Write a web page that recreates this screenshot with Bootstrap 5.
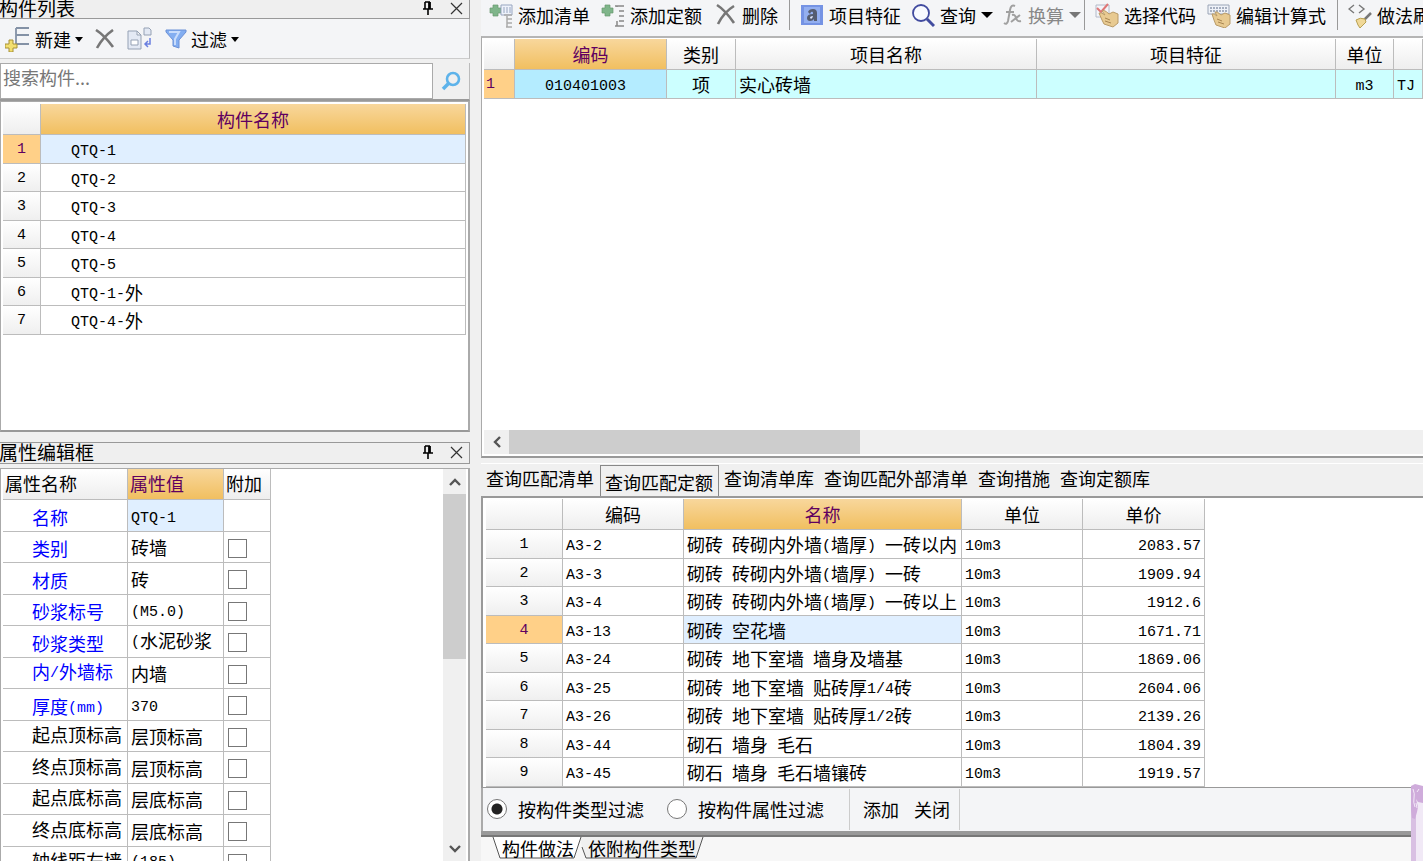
<!DOCTYPE html>
<html lang="zh-CN">
<head>
<meta charset="utf-8">
<meta name="viewport" content="width=device-width, initial-scale=1">
<title>构件做法</title>
<link href="https://cdn.jsdelivr.net/npm/bootstrap@5.3.0/dist/css/bootstrap.min.css" rel="stylesheet">
<style>
  body { background: #f0f0f0; color: #000; font: 18px/24px "Noto Sans CJK SC", sans-serif; }
  .l, .num { font-family: "Liberation Mono", "Noto Sans CJK SC", monospace; font-size: 15px; white-space: pre; }
  .l { line-height: 0; vertical-align: 2px; }
  .side { flex: 0 0 470px; }
  .work { min-width: 0; margin-left: 11px; }
  button { border: 0; background: none; padding: 0; color: inherit; white-space: nowrap; }
  svg { display: block; flex: none; }

  .panel-title { flex: none; height: 22px; border: 1px solid #999; border-left: 0; background: #efefef; font-size: 19px; line-height: 20px; padding-right: 6px; padding-bottom: 2px; }
  .panel-title h2 { font: inherit; margin: 0 0 0 -1px; }
  .panel-title.first { height: 19px; border-top: 0; padding-bottom: 3px; }
  .tools { flex: none; height: 40px; background: #f4f5f7; border-right: 1px solid #bbb; border-bottom: 1px solid #ccc; padding-left: 5px; padding-top: 1px; gap: 12px; }
  .caret { width: 0; border: 4px solid transparent; border-top: 5px solid #000; border-bottom: 0; }
  .caret.wide { border-width: 6px 6px 0; }
  .search { height: 38px; border-bottom: 2px solid #999; border-right: 1px solid #bbb; }
  .search input { border: 1px solid #aaa; border-radius: 0; background: #fff; font-size: 18px; padding: 0 0 8px 2px; min-width: 0; color: #000; }
  .search input::placeholder { color: #777; opacity: 1; }
  .search button { width: 36px; display: flex; justify-content: center; align-items: center; }
  .pane { background: #fff; border: 1px solid #aaa; border-right: 2px solid #aaa; padding: 2px; }
  .pane-list { height: 331px; border-bottom: 2px solid #999; }

  .sheet { border-collapse: separate; border-spacing: 0; table-layout: fixed; line-height: 24px; }
  .sheet th, .sheet td { padding: 0 0 0 3px; border-right: 1px solid #bcbcbc; border-bottom: 1px solid #bcbcbc; font-weight: 400; white-space: nowrap; overflow: hidden; vertical-align: middle; }
  .sheet thead th { height: 31px; background: linear-gradient(#fff, #eee); text-align: center; padding: 0; }
  .sheet thead .hot { background: linear-gradient(#f8d79c, #f1bf60); color: #600060; }
  .sheet tbody tr { height: 29px; }
  .sheet tbody tr:nth-child(even) { height: 28px; }
  .sheet .num { text-align: center; padding: 2px 0 0; background: linear-gradient(#fff, #efefef); }
  .sheet .sel .num { background: #ffd088; color: #600060; }
  .sheet .cur { background: #e0efff; }
  .sheet td.mid { text-align: center; padding-left: 0; }
  .names td:last-child { padding-left: 30px; }
  .props thead th { text-align: left; padding: 0 0 2px 2px; }
  .props tbody tr:nth-child(odd) { height: 32px; }
  .props tbody tr:nth-child(even) { height: 31px; }
  .props tbody th { padding: 2px 0 0 29px; color: #00f; }
  .props tbody .long { padding: 0 0 4px 29px; }
  .props tbody .plain { color: #000; }
  .props input { appearance: none; display: block; width: 19px; height: 19px; border: 1px solid #777; background: #fff; margin: 2px 0 0 1px; }
  .bill td { background: #ccffff; }
  .sheet td.code { background: #b4ecff; padding-right: 10px; }
  .bill .num { text-align: left; padding-left: 2px; }
  .quota .price { text-align: right; padding-right: 3px; }

  .vbar { width: 23px; background: #f0f0f0; }
  .vbar i { height: 165px; background: #cdcdcd; }
  .vbar span, .hbar span { display: flex; justify-content: center; align-items: center; }
  .vbar span { height: 25px; }
  .hbar { height: 24px; background: #f0f0f0; }
  .hbar span { width: 25px; }
  .hbar i { width: 351px; background: #cdcdcd; }

  .cmds { height: 36px; background: #f4f5f7; overflow: hidden; padding: 0 0 6px 8px; }
  .cmds button { display: flex; align-items: center; gap: 5px; margin-right: 11px; flex: none; }
  .cmds .sep { width: 1px; height: 30px; background: #999; margin-right: 10px; flex: none; }
  .cmds .drop { margin-right: 10px; }
  .cmds .tight { margin-right: 3px; color: #888; }
  .bill-pane { height: 422px; border: 1px solid #aaa; border-top: 2px solid #b5b5b5; border-bottom: 2px solid #999; border-right: 0; background: #fff; padding: 1px 0 2px 2px; overflow: hidden; }
  .qtabs { height: 33px; margin-top: 5px; border-top: 1px solid #fff; overflow: hidden; }
  .qtabs button { line-height: 28px; margin: 0 5px; flex: none; }
  .qtabs .on { border: 1px solid #888; border-bottom: 0; padding: 2px 5px 0 4px; margin: 1px 0 0 1px; height: 31px; }
  .quota-pane { height: 292px; border: 1px solid #999; border-width: 2px 0 1px 2px; background: #fff; padding: 1px 0 0 3px; overflow: hidden; }
  .filter { height: 43px; background: #f4f5f7; border-left: 2px solid #aaa; padding: 0 0 1px 4px; }
  .filter label { margin-left: 11px; }
  .filter input { appearance: none; width: 20px; height: 20px; border: 1px solid #777; border-radius: 50%; background: #fff; margin: 0; }
  .filter input:checked { background: radial-gradient(circle, #222 5px, #fff 6px); }
  .filter label + input { margin-left: 23px; }
  .filter .acts { border: 1px solid #ccc; border-width: 0 1px; height: 41px; margin-left: 25px; padding: 0 9px 0 13px; gap: 15px; }
  .band { height: 6px; background: #999; border-bottom: 2px solid #777; }
  .foot { background: #f7f7f7; padding-left: 11px; height: 30px; }
  .sheet-tab { position: relative; height: 22px; line-height: 22px; margin-right: -4px; padding: 0 8px 0 10px; }
  .sheet-tab svg { position: absolute; inset: 0; width: 100%; height: 100%; }
  .sheet-tab b { position: relative; font-weight: 400; }
  .deco { position: absolute; right: 0; bottom: 0; }
</style>
</head>
<body>
<div class="vh-100 d-flex overflow-hidden position-relative">

  <aside class="side d-flex flex-column">
    <header class="panel-title first d-flex align-items-center justify-content-between">
      <h2>构件列表</h2>
      <div class="d-flex gap-3">
        <button aria-label="固定"><svg width="12" height="14" viewBox="0 0 12 14" fill="none" stroke="#000" stroke-width="1.6"><path d="M3 1v7M8 1v7M3 1h5M1 8h10M6 8v6"/><path d="M7.3 1v7" stroke-width="2.4"/></svg></button>
        <button aria-label="关闭"><svg width="13" height="14" viewBox="0 0 13 14" stroke="#333" stroke-width="1.2"><path d="M1 2l11 11M12 2L1 13"/></svg></button>
      </div>
    </header>
    <div class="tools d-flex align-items-center">
      <button class="d-flex align-items-center">
        <svg class="me-1" width="26" height="26" viewBox="0 0 26 26"><path d="M11 2v7h13M11 9v9h13M11 2h13" fill="none" stroke="#8492a6" stroke-width="1.8"/><path d="M4 14h4v4h4v4H8v4H4v-4H0v-4h4z" fill="#f2df70" stroke="#a69034"/></svg>
        新建<span class="caret ms-1"></span></button>
      <button aria-label="删除"><svg width="20" height="20" viewBox="0 0 20 20"><path d="M1 1Q9 6 18 18M18 1Q8 8 2 19" stroke="#777" stroke-width="2.6" fill="none"/></svg></button>
      <button aria-label="复制"><svg width="26" height="24" viewBox="0 0 26 24" fill="#e3e9f4" stroke="#95a1b4"><path d="M1 4h9l4 4v14H1zM10 4v4h4"/><path d="M4 13h7v5H4z" fill="#fff"/><path d="M17 1h5l2 2v5h-7z"/><path d="M23 11v6h-5m3-3l-3 3 3 3" fill="none" stroke="#6a7fe0" stroke-width="1.5"/></svg></button>
      <button class="d-flex align-items-center">
        <svg class="me-1" width="22" height="20" viewBox="0 0 22 20"><path d="M1 1h20v2l-7 8v8l-6-2v-6L1 3z" fill="#83aef1" stroke="#6b90d6"/><path d="M4 3h10l-4 7v6" stroke="#c8dcfc" stroke-width="2" fill="none"/></svg>
        过滤<span class="caret ms-1"></span></button>
    </div>
    <div class="search d-flex mt-1 flex-shrink-0 align-items-stretch">
      <input class="flex-grow-1" type="text" placeholder="搜索构件..." aria-label="搜索构件">
      <button aria-label="搜索"><svg width="20" height="20" viewBox="0 0 20 20" fill="none" stroke="#5eb3ea"><circle cx="12" cy="8" r="6" stroke-width="2.6"/><path d="M8 12l-6 6" stroke-width="3.6"/></svg></button>
    </div>
    <div class="pane pane-list flex-shrink-0">
      <table class="sheet names w-100">
        <colgroup><col style="width:38px"><col></colgroup>
        <thead><tr><th></th><th class="hot">构件名称</th></tr></thead>
        <tbody>
          <tr class="sel"><td class="num">1</td><td class="cur"><span class="l">QTQ-1</span></td></tr>
          <tr><td class="num">2</td><td><span class="l">QTQ-2</span></td></tr>
          <tr><td class="num">3</td><td><span class="l">QTQ-3</span></td></tr>
          <tr><td class="num">4</td><td><span class="l">QTQ-4</span></td></tr>
          <tr><td class="num">5</td><td><span class="l">QTQ-5</span></td></tr>
          <tr><td class="num">6</td><td><span class="l">QTQ-1-</span>外</td></tr>
          <tr><td class="num">7</td><td><span class="l">QTQ-4-</span>外</td></tr>
        </tbody>
      </table>
    </div>
    <header class="panel-title d-flex align-items-center justify-content-between" style="margin-top:10px">
      <h2>属性编辑框</h2>
      <div class="d-flex gap-3">
        <button aria-label="固定"><svg width="12" height="14" viewBox="0 0 12 14" fill="none" stroke="#000" stroke-width="1.6"><path d="M3 1v7M8 1v7M3 1h5M1 8h10M6 8v6"/><path d="M7.3 1v7" stroke-width="2.4"/></svg></button>
        <button aria-label="关闭"><svg width="13" height="14" viewBox="0 0 13 14" stroke="#333" stroke-width="1.2"><path d="M1 2l11 11M12 2L1 13"/></svg></button>
      </div>
    </header>
    <div class="pane mt-1 flex-grow-1 d-flex justify-content-between overflow-hidden py-0 border-bottom-0">
      <table class="sheet props align-self-start" style="width:268px">
        <colgroup><col style="width:125px"><col style="width:96px"><col style="width:47px"></colgroup>
        <thead><tr><th>属性名称</th><th class="hot">属性值</th><th>附加</th></tr></thead>
        <tbody>
          <tr><th>名称</th><td class="cur"><span class="l">QTQ-1</span></td><td></td></tr>
          <tr><th>类别</th><td>砖墙</td><td><input type="checkbox" aria-label="类别"></td></tr>
          <tr><th>材质</th><td>砖</td><td><input type="checkbox" aria-label="材质"></td></tr>
          <tr><th>砂浆标号</th><td><span class="l">(M5.0)</span></td><td><input type="checkbox" aria-label="砂浆标号"></td></tr>
          <tr><th>砂浆类型</th><td class="pb-1"><span class="l">(</span>水泥砂浆</td><td><input type="checkbox" aria-label="砂浆类型"></td></tr>
          <tr><th class="long">内<span class="l">/</span>外墙标</th><td>内墙</td><td><input type="checkbox" aria-label="内/外墙标"></td></tr>
          <tr><th>厚度<span class="l">(mm)</span></th><td><span class="l">370</span></td><td><input type="checkbox" aria-label="厚度"></td></tr>
          <tr><th class="long plain">起点顶标高</th><td>层顶标高</td><td><input type="checkbox" aria-label="起点顶标高"></td></tr>
          <tr><th class="long plain">终点顶标高</th><td>层顶标高</td><td><input type="checkbox" aria-label="终点顶标高"></td></tr>
          <tr><th class="long plain">起点底标高</th><td>层底标高</td><td><input type="checkbox" aria-label="起点底标高"></td></tr>
          <tr><th class="long plain">终点底标高</th><td>层底标高</td><td><input type="checkbox" aria-label="终点底标高"></td></tr>
          <tr><th class="long plain">轴线距左墙</th><td class="pb-1"><span class="l">(185)</span></td><td><input type="checkbox" aria-label="轴线距左墙"></td></tr>
        </tbody>
      </table>
      <div class="vbar d-flex flex-column">
        <span><svg width="12" height="8" viewBox="0 0 12 8" fill="none" stroke="#555" stroke-width="2.4"><path d="M1 7l5-5 5 5"/></svg></span>
        <i></i>
        <span class="mt-auto"><svg width="12" height="8" viewBox="0 0 12 8" fill="none" stroke="#555" stroke-width="2.4"><path d="M1 1l5 5 5-5"/></svg></span>
      </div>
    </div>
  </aside>

  <main class="work flex-grow-1 d-flex flex-column">
    <div class="cmds d-flex align-items-center flex-shrink-0">
      <button><svg width="24" height="26" viewBox="0 0 24 26"><path d="M4 3h5v3h3v5H9v3H4v-3H1V6h3z" fill="#7fb58a" stroke="#69996f" stroke-width=".7"/><path d="M12 3h11v10H12z" fill="#eef2fb" stroke="#97a5c0"/><path d="M14 6h8M14 8h8M14 10h8" stroke="#97a5c0" stroke-dasharray="2 1"/><path d="M15 13h8M18 14v11M18 17h5M18 21h5M17 25h6" fill="none" stroke="#aaa" stroke-width="1.5"/></svg>添加清单</button>
      <button><svg width="24" height="26" viewBox="0 0 24 26"><path d="M4 3h5v3h3v5H9v3H4v-3H1V6h3z" fill="#7fb58a" stroke="#69996f" stroke-width=".7"/><path d="M14 4h9M18 9h5M18 14h5M18 19h5M14 24h9M16 4v1M16 19v5" fill="none" stroke="#888" stroke-width="1.5"/></svg>添加定额</button>
      <button><svg width="24" height="24" viewBox="0 0 24 24"><path d="M4 2Q12 7 21 20M21 3Q11 9 5 21" stroke="#777" stroke-width="2.6" fill="none"/></svg>删除</button>
      <span class="sep"></span>
      <button class="drop"><svg width="24" height="24" viewBox="0 0 24 24"><path d="M1 2h22v20H1z" fill="#7593e4"/><path d="M4 4h16v16H4z" fill="#93aff0"/><path d="M8 9q1-3 5-3 4 0 4 4v8h-3v-2q-1 2-4 2-3 0-3-3 0-4 6-4v-1q0-2-2-1l-1 2z" fill="#555d70"/><path d="M13 13q-3 0-3 2 2 2 3-2z" fill="#dfe7fb"/></svg>项目特征</button>
      <button class="drop"><svg width="24" height="26" viewBox="0 0 24 26" fill="none" stroke="#414b9f"><circle cx="10" cy="11" r="8" stroke-width="1.8" fill="#f8faff"/><path d="M16 17l7 7" stroke-width="3"/></svg>查询<span class="caret wide"></span></button>
      <button class="tight"><svg width="20" height="22" viewBox="0 0 20 22"><path d="M12 2Q8 0 7 6L5 17Q4 21 1 19M3 8h8M9 11q3-1 4 3t5 3M17 11l-9 7" fill="none" stroke="#a0a0a0" stroke-width="2"/></svg>换算<span class="caret wide" style="border-top-color:#777"></span></button>
      <span class="sep"></span>
      <button><svg width="24" height="26" viewBox="0 0 24 26"><path d="M1 3h13v12H1z" fill="#f3f5fa" stroke="#b4bac8"/><path d="M2 6l4 4 7-8" fill="none" stroke="#df7777" stroke-width="2"/><path d="M4 11q2-1 6 2l-3-4q2-2 7 3l4-2 5 2v9l-5 4-9-3-2-4z" fill="#e8ca91" stroke="#b99b68"/><path d="M10 16l5 2M10 19l6 2" stroke="#a88652"/></svg>选择代码</button>
      <button><svg width="24" height="26" viewBox="0 0 24 26"><path d="M1 3h21v9H1z" fill="#eff2f8" stroke="#9aa4b6"/><path d="M3 6h17M3 9h17" stroke="#8d98ac" stroke-width="1.6" stroke-dasharray="2 1"/><path d="M5 12q2-1 5 2l-2-4q2-1 6 3l4-2 5 2v9l-5 4-9-3-2-5z" fill="#e8ca91" stroke="#b99b68"/><path d="M10 17l5 2M11 20l6 2" stroke="#a88652"/></svg>编辑计算式</button>
      <span class="sep"></span>
      <button><svg width="24" height="26" viewBox="0 0 24 26"><path d="M6 3L1 7l5 4M11 3l5 4-5 4" fill="none" stroke="#777" stroke-width="1.4"/><path d="M23 11l-7 7" stroke="#777" stroke-width="2.5"/><path d="M8 18q4-3 9-1l1 3-6 6-2-3z" fill="#f0d898" stroke="#b8a050"/></svg>做法刷</button>
    </div>
    <section class="bill-pane d-flex flex-column flex-shrink-0">
      <table class="sheet bill w-100">
        <colgroup><col style="width:31px"><col style="width:152px"><col style="width:69px"><col style="width:301px"><col style="width:299px"><col style="width:58px"><col></colgroup>
        <thead><tr><th></th><th class="hot">编码</th><th>类别</th><th>项目名称</th><th>项目特征</th><th>单位</th><th></th></tr></thead>
        <tbody><tr class="sel"><td class="num">1</td><td class="code mid"><span class="l">010401003</span></td><td class="mid">项</td><td>实心砖墙</td><td></td><td class="mid"><span class="l">m3</span></td><td><span class="l">TJ</span></td></tr></tbody>
      </table>
      <div class="hbar d-flex mt-auto">
        <span><svg width="10" height="12" viewBox="0 0 10 12" fill="none" stroke="#555" stroke-width="2.4"><path d="M8 1L3 6l5 5"/></svg></span><i></i>
      </div>
    </section>
    <nav class="qtabs d-flex flex-shrink-0 align-items-start">
      <button>查询匹配清单</button><button class="on">查询匹配定额</button><button>查询清单库</button><button>查询匹配外部清单</button><button>查询措施</button><button>查询定额库</button>
    </nav>
    <section class="quota-pane flex-shrink-0">
      <table class="sheet quota" style="width:719px">
        <colgroup><col style="width:77px"><col style="width:121px"><col style="width:278px"><col style="width:121px"><col style="width:122px"></colgroup>
        <thead><tr><th></th><th>编码</th><th class="hot">名称</th><th>单位</th><th>单价</th></tr></thead>
        <tbody>
          <tr><td class="num">1</td><td><span class="l">A3-2</span></td><td>砌砖<span class="l"> </span>砖砌内外墙<span class="l">(</span>墙厚<span class="l">) </span>一砖以内</td><td><span class="l">10m3</span></td><td class="price"><span class="l">2083.57</span></td></tr>
          <tr><td class="num">2</td><td><span class="l">A3-3</span></td><td>砌砖<span class="l"> </span>砖砌内外墙<span class="l">(</span>墙厚<span class="l">) </span>一砖</td><td><span class="l">10m3</span></td><td class="price"><span class="l">1909.94</span></td></tr>
          <tr><td class="num">3</td><td><span class="l">A3-4</span></td><td>砌砖<span class="l"> </span>砖砌内外墙<span class="l">(</span>墙厚<span class="l">) </span>一砖以上</td><td><span class="l">10m3</span></td><td class="price"><span class="l">1912.6</span></td></tr>
          <tr class="sel"><td class="num">4</td><td><span class="l">A3-13</span></td><td class="cur">砌砖<span class="l"> </span>空花墙</td><td><span class="l">10m3</span></td><td class="price"><span class="l">1671.71</span></td></tr>
          <tr><td class="num">5</td><td><span class="l">A3-24</span></td><td>砌砖<span class="l"> </span>地下室墙<span class="l"> </span>墙身及墙基</td><td><span class="l">10m3</span></td><td class="price"><span class="l">1869.06</span></td></tr>
          <tr><td class="num">6</td><td><span class="l">A3-25</span></td><td>砌砖<span class="l"> </span>地下室墙<span class="l"> </span>贴砖厚<span class="l">1/4</span>砖</td><td><span class="l">10m3</span></td><td class="price"><span class="l">2604.06</span></td></tr>
          <tr><td class="num">7</td><td><span class="l">A3-26</span></td><td>砌砖<span class="l"> </span>地下室墙<span class="l"> </span>贴砖厚<span class="l">1/2</span>砖</td><td><span class="l">10m3</span></td><td class="price"><span class="l">2139.26</span></td></tr>
          <tr><td class="num">8</td><td><span class="l">A3-44</span></td><td>砌石<span class="l"> </span>墙身<span class="l"> </span>毛石</td><td><span class="l">10m3</span></td><td class="price"><span class="l">1804.39</span></td></tr>
          <tr><td class="num">9</td><td><span class="l">A3-45</span></td><td>砌石<span class="l"> </span>墙身<span class="l"> </span>毛石墙镶砖</td><td><span class="l">10m3</span></td><td class="price"><span class="l">1919.57</span></td></tr>
        </tbody>
      </table>
    </section>
    <div class="filter d-flex align-items-center flex-shrink-0">
      <input type="radio" name="by" id="byType" checked><label for="byType">按构件类型过滤</label>
      <input type="radio" name="by" id="byProp"><label for="byProp">按构件属性过滤</label>
      <div class="acts d-flex align-items-center"><button>添加</button><button>关闭</button></div>
    </div>
    <div class="band flex-shrink-0"></div>
    <nav class="foot d-flex flex-shrink-0">
      <button class="sheet-tab" style="z-index:1"><svg viewBox="0 0 90 22" preserveAspectRatio="none"><path d="M1 0l7 21h74l7-21z" fill="#fff"/><path d="M1 0l7 21h74l7-21" fill="none" stroke="#555"/></svg><b>构件做法</b></button>
      <button class="sheet-tab"><svg viewBox="0 0 126 22" preserveAspectRatio="none"><path d="M1 0l7 21h110l7-21z" fill="#f0f0f0"/><path d="M4 10l4 11h110l7-21" fill="none" stroke="#555"/></svg><b>依附构件类型</b></button>
    </nav>
  </main>

  <svg class="deco" width="12" height="77" viewBox="0 0 12 77"><path d="M0 2h12v75H0z" fill="#f1e9f6"/><path d="M0 3h5v74H0z" fill="#d9c0e3"/><path d="M0 2l4-2 8 2v17l-5-1-2-3 2 8-1 5-2 7-3-1-1-8z" fill="#cfacdb"/><path d="M2 5q2 5 1 9t1 9M6 8l2-3M5 19l1 5" fill="none" stroke="#f3eaf8"/></svg>
</div>
<script src="https://cdn.jsdelivr.net/npm/bootstrap@5.3.0/dist/js/bootstrap.bundle.min.js"></script>
</body>
</html>
